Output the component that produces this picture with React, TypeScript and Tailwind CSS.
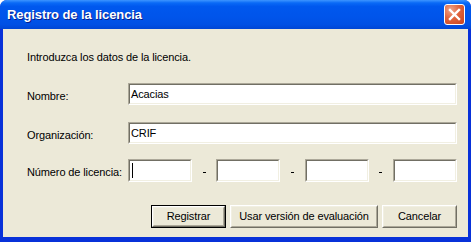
import React from 'react';

const dialogFont = { fontFamily: '"Liberation Sans", Arial, sans-serif' };

const Field: React.FC<{ value?: string; caret?: boolean; className?: string }> = ({ value, caret, className }) => (
  <div className={`border border-t-[#aca899] border-l-[#aca899] border-b-white border-r-white ${className ?? ''}`}>
    <div className="h-full border border-t-[#716f64] border-l-[#716f64] border-b-[#f1efe2] border-r-[#f1efe2] bg-white flex items-center pl-[1px] text-[11px] leading-[13px] text-black">
      {caret && <span className="block w-px h-[15px] bg-black ml-[1px]" />}
      {value}
    </div>
  </div>
);

const DialogButton: React.FC<{ label: string; width: string; isDefault?: boolean }> = ({ label, width, isDefault }) => (
  <div className={`${width} h-[23px] ${isDefault ? 'border border-black' : ''}`}>
    <div className="h-full border border-t-white border-l-white border-b-[#716f64] border-r-[#716f64]">
      <div className="h-full border border-t-[#f1efe2] border-l-[#f1efe2] border-b-[#aca899] border-r-[#aca899] flex items-center justify-center text-[11px] text-black">
        {label}
      </div>
    </div>
  </div>
);

const Dash = () => (
  <div className="flex-1 flex items-center justify-center pt-[3px]">
    <span className="block w-[3px] h-px bg-black" />
  </div>
);

export default function App() {
  return (
    <div className="w-[471px] h-[242px] flex flex-col bg-[#0831d9] rounded-t-[7px] overflow-hidden" style={dialogFont}>
      {/* title bar */}
      <div className="h-[29px] shrink-0 flex items-center justify-between pl-[7px] pr-[6px] bg-[linear-gradient(to_bottom,#3d95ff_0%,#0a6af6_10%,#0058ee_22%,#0054ea_60%,#0050e4_85%,#0046d4_100%)]">
        <span className="text-white font-bold text-[13px] tracking-[-0.1px] pt-[1px] [text-shadow:1px_1px_0_#0a1e8a]">Registro de la licencia</span>
        <div className="w-[21px] h-[21px] rounded-[3px] border border-white flex items-center justify-center bg-[radial-gradient(circle_at_30%_25%,#f0a58a_0%,#e0643d_45%,#c8421c_100%)]">
          <svg width="13" height="13" viewBox="0 0 13 13">
            <path d="M2 2 L11 11 M11 2 L2 11" stroke="white" strokeWidth="2.4" strokeLinecap="square" />
          </svg>
        </div>
      </div>

      {/* body */}
      <div className="flex-1 mx-[3px] mb-[5px] bg-[#ece9d8] flex flex-col pl-[24px] pr-[11px] pt-[22px] text-[11px] leading-[13px] tracking-[-0.12px] text-black">
        <p>Introduzca los datos de la licencia.</p>

        <div className="flex items-center mt-[19px]">
          <span className="w-[101px] pt-[5px]">Nombre:</span>
          <Field value="Acacias" className="flex-1 h-[22px]" />
        </div>

        <div className="flex items-center mt-[17px]">
          <span className="w-[101px] pt-[5px]">Organización:</span>
          <Field value="CRIF" className="flex-1 h-[22px]" />
        </div>

        <div className="flex items-center mt-[15px]">
          <span className="w-[101px] pt-[3px]">Número de licencia:</span>
          <div className="flex-1 flex">
            <Field caret className="w-[64px] h-[23px]" />
            <Dash />
            <Field className="w-[64px] h-[23px]" />
            <Dash />
            <Field className="w-[64px] h-[23px]" />
            <Dash />
            <Field className="w-[64px] h-[23px]" />
          </div>
        </div>

        <div className="flex justify-end gap-[4px] mt-[23px]">
          <DialogButton label="Registrar" width="w-[75px]" isDefault />
          <DialogButton label="Usar versión de evaluación" width="w-[148px]" />
          <DialogButton label="Cancelar" width="w-[75px]" />
        </div>
      </div>
    </div>
  );
}
